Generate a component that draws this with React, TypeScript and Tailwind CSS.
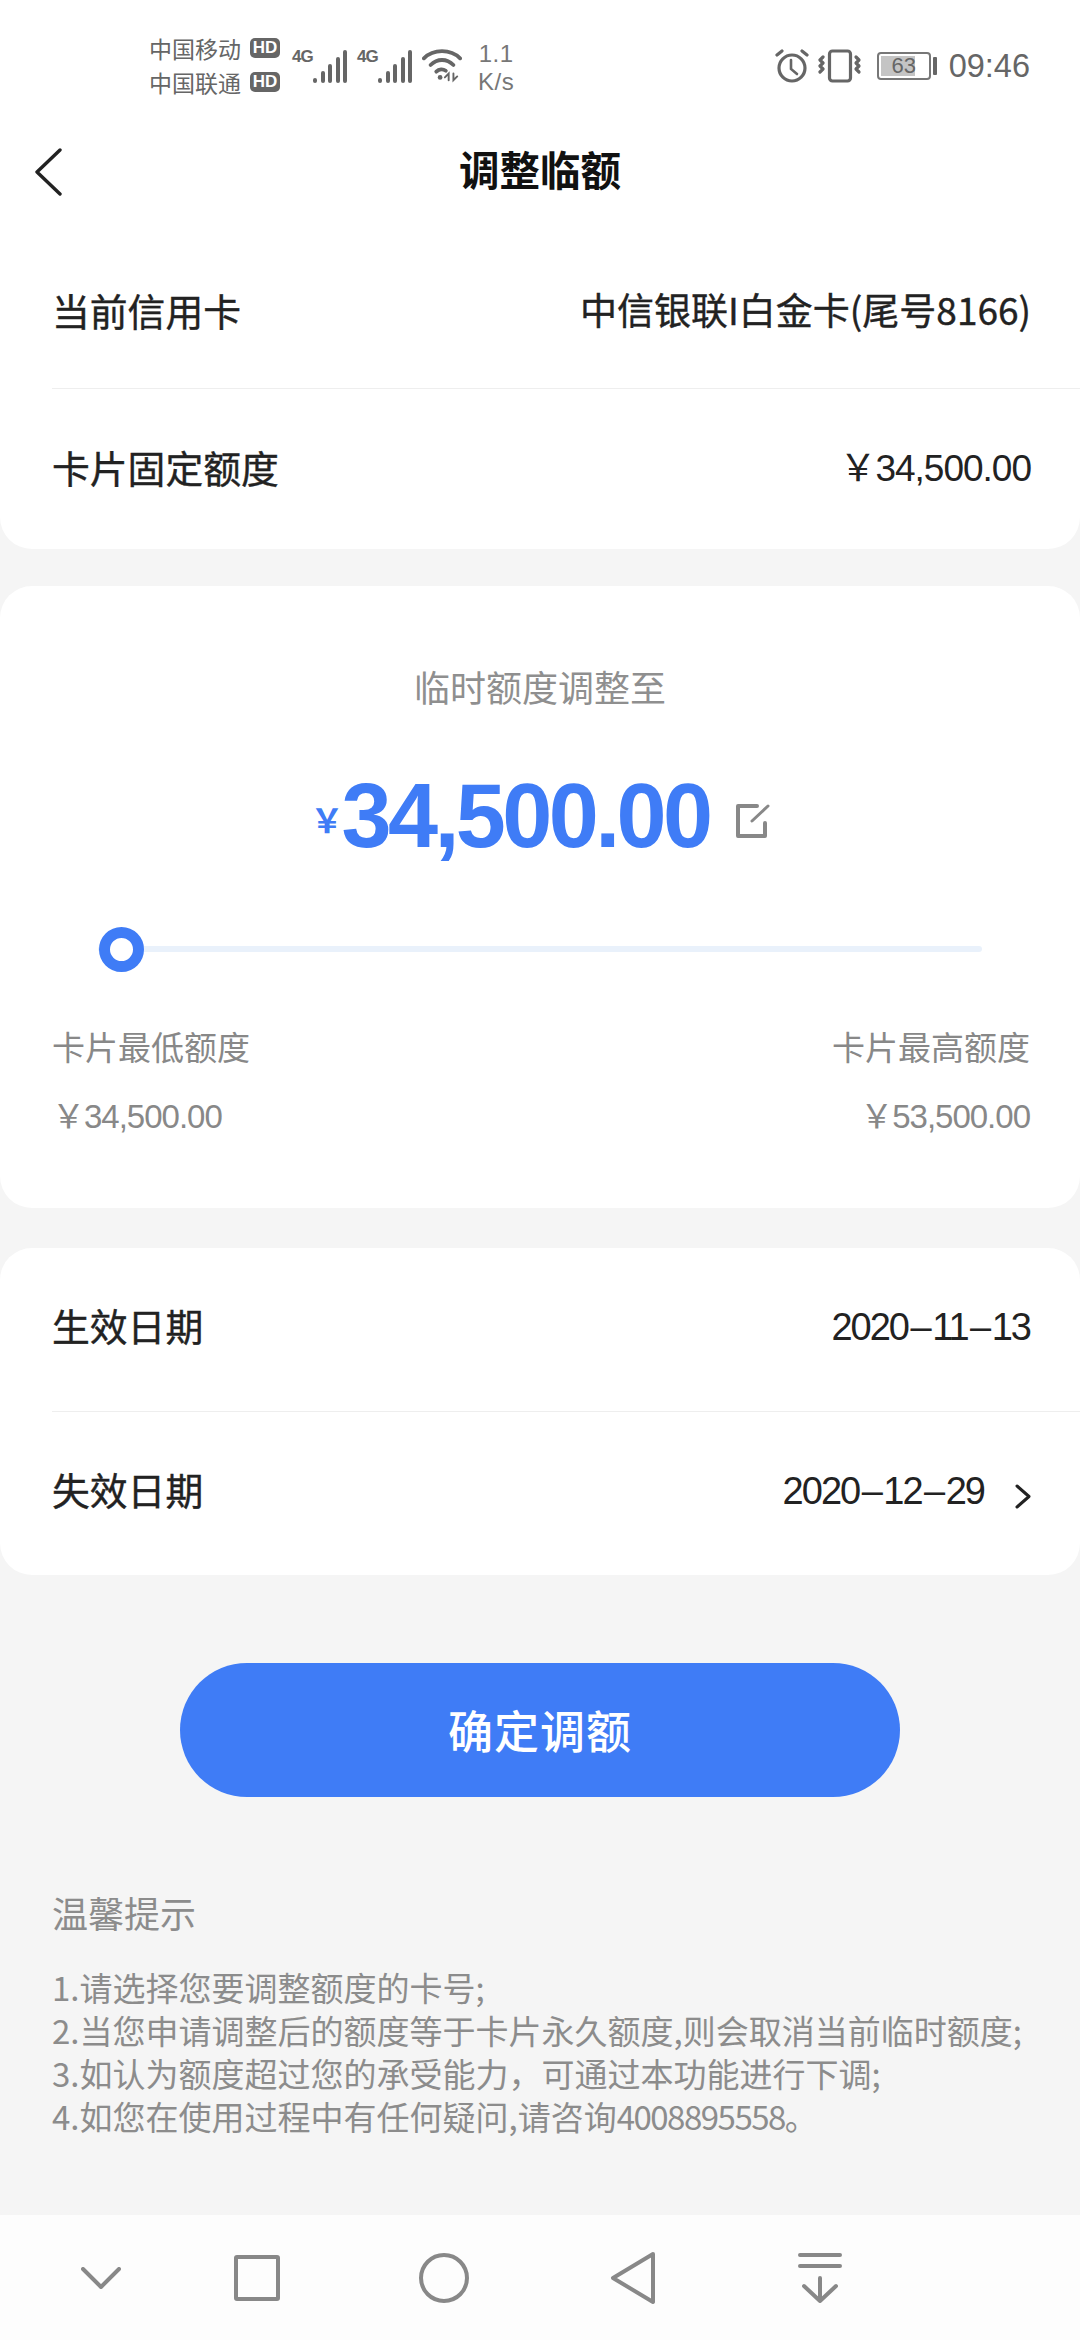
const cjk = "font-['Noto_Sans_CJK_SC','Liberation_Sans',sans-serif]";
const latin = "font-['Liberation_Sans','Noto_Sans_CJK_SC',sans-serif]";

function StatusBar() {
	return (
		<div className="h-[130px] flex items-start text-[#666]">
			<div className="ml-[149px] mt-[35px] flex flex-col gap-[8px] text-[23px] leading-[26px]">
				<div className="flex items-center gap-[9px]">中国移动<HdBadge /></div>
				<div className="flex items-center gap-[9px]">中国联通<HdBadge /></div>
			</div>
			<div className="ml-[12px] mt-[47px] flex items-end">
				<Signal />
				<div className="w-[10px]" />
				<Signal />
				<svg className="ml-[10px]" width="40" height="36" viewBox="0 0 42 36" fill="none" stroke="#666" strokeWidth="4" strokeLinecap="round">
					<path d="M2 11C12 1 30 1 40 11" />
					<path d="M9 18C16 11 26 11 33 18" />
					<path d="M15 25C18 22 22 22 25 24" />
					<circle cx="19" cy="31" r="2.5" fill="#666" stroke="none" />
					<path d="M28 34v-7l-4 4M33 27v7l4-4" strokeWidth="2" />
				</svg>
			</div>
			<div className={`ml-[16px] mt-[40px] flex flex-col items-center ${latin} text-[#777] text-[24px] leading-[28px] tracking-[0.5px]`}>
				<span>1.1</span>
				<span>K/s</span>
			</div>
			<div className="ml-auto mr-[50px] mt-[46px] flex items-center h-[40px]">
				<svg width="34" height="34" viewBox="0 0 34 34" fill="none" stroke="#666" strokeWidth="3.2" strokeLinecap="round">
					<circle cx="17" cy="19" r="13" />
					<path d="M16 11v9l6 5" strokeWidth="2.6" />
					<path d="M2 6l5-4M32 6l-5-4" />
				</svg>
				<svg className="ml-[9px]" width="44" height="34" viewBox="0 0 44 34" fill="none" stroke="#666" strokeWidth="3.2" strokeLinecap="round" strokeLinejoin="round">
					<rect x="11.5" y="2" width="21" height="30" rx="3" />
					<path d="M5 8l-3 3 3 3-3 3 3 3-3 3" />
					<path d="M38 8l3 3-3 3 3 3-3 3 3 3" />
				</svg>
				<div className={`ml-[15px] relative w-[54px] h-[28px] border-2 border-[#777] rounded-[4px] bg-white overflow-hidden flex items-center justify-center ${latin} text-[22px] leading-none`}>
					<div className="absolute left-[2px] top-[2px] bottom-[2px] w-[34px] bg-[#c4c4c4]" />
					<span className="relative">63</span>
				</div>
				<div className="ml-[2px] w-[4px] h-[18px] bg-[#666] rounded-[1px]" />
				<span className={`ml-[12px] ${latin} text-[32.5px] leading-none`}>09:46</span>
			</div>
		</div>
	);
}

function HdBadge() {
	return (
		<span className={`w-[30px] h-[20px] rounded-[5px] bg-[#666] text-white text-[17px] leading-[20px] font-bold text-center ${latin}`}>HD</span>
	);
}

function Signal() {
	return (
		<div className="relative w-[55px] h-[34px] flex items-end justify-end gap-[3.5px]">
			<span className={`absolute left-0 top-[-1px] text-[17px] leading-none font-bold ${latin} tracking-[-1px]`}>4G</span>
			<div className="w-[4px] h-[5px] bg-[#666] rounded-full" />
			<div className="w-[4px] h-[12px] bg-[#666] rounded-full" />
			<div className="w-[4px] h-[19px] bg-[#666] rounded-full" />
			<div className="w-[4px] h-[26px] bg-[#666] rounded-full" />
			<div className="w-[4px] h-[33px] bg-[#666] rounded-full" />
		</div>
	);
}

function Row({ label, value, h }: { label: string; value: React.ReactNode; h: string }) {
	return (
		<div className={`flex items-center justify-between ${h}`}>
			<span className="text-[37.8px] leading-none text-[#222] [-webkit-text-stroke:0.4px_#222]">{label}</span>
			{value}
		</div>
	);
}

function DateText({ parts }: { parts: string[] }) {
	return (
		<span className={`mt-[3px] text-[38px] leading-none text-[#222] tracking-[-2px] ${latin}`}>
			{parts[0]}<span className="px-[2.5px]">–</span>{parts[1]}<span className="px-[2.5px]">–</span>{parts[2]}
		</span>
	);
}

function Nav() {
	return (
		<div className="mt-auto h-[125px] bg-[#fdfdfd] flex items-center">
			<svg className="ml-[81px]" width="40" height="22" viewBox="0 0 40 22" fill="none" stroke="#888" strokeWidth="4" strokeLinecap="round" strokeLinejoin="round">
				<path d="M2 2l18 18L38 2" />
			</svg>
			<div className="ml-[113px] w-[46px] h-[46px] border-[4px] border-[#888] rounded-[3px]" />
			<div className="ml-[139px] w-[50px] h-[50px] border-[4px] border-[#888] rounded-full" />
			<svg className="ml-[141px]" width="46" height="54" viewBox="0 0 46 54" fill="none" stroke="#888" strokeWidth="4" strokeLinejoin="round">
				<path d="M43 3L3 27l40 24z" />
			</svg>
			<svg className="ml-[142px]" width="44" height="50" viewBox="0 0 44 50" fill="none" stroke="#888" strokeWidth="4" strokeLinecap="round" strokeLinejoin="round">
				<path d="M2 2h40M2 13h40M22 25v22M6 33l16 15 16-15" />
			</svg>
		</div>
	);
}

export default function App() {
	return (
		<div className={`w-[1080px] h-[2340px] flex flex-col bg-[#f5f5f5] overflow-hidden ${cjk}`}>
			<div className="bg-white rounded-b-[32px] h-[549px] shrink-0">
				<StatusBar />
				<div className="relative h-[84px] flex items-center justify-center">
					<svg className="absolute left-[34px] top-[18px]" width="30" height="48" viewBox="0 0 30 48" fill="none" stroke="#222" strokeWidth="3.4" strokeLinecap="round" strokeLinejoin="round">
						<path d="M26 2L3 24l23 22" />
					</svg>
					<span className="mt-[-6px] text-[40.5px] leading-none font-bold text-[#111]">调整临额</span>
				</div>
				<div className="pl-[52px] mt-[-4px]">
					<Row
						h="h-[179px] pt-[21px] pr-[49px] border-b border-[#eeeeee]"
						label="当前信用卡"
						value={<span className="text-[37px] leading-none text-[#222] [-webkit-text-stroke:0.4px_#222]">中信银联I白金卡(尾号8166)</span>}
					/>
					<Row
						h="h-[156px] pr-[49px]"
						label="卡片固定额度"
						value={<span className={`mt-[3px] text-[37px] leading-none text-[#222] tracking-[-1px] ${latin}`}>￥34,500.00</span>}
					/>
				</div>
			</div>

			<div className="mt-[37px] h-[622px] shrink-0 bg-white rounded-[32px] pl-[52px] pr-[50px] flex flex-col">
				<div className="mt-[82px] pr-[2px] text-center text-[36px] leading-none text-[#8f8f8f]">临时额度调整至</div>
				<div className={`mt-[67px] pr-[2px] flex items-center justify-center ${latin}`}>
					<span className="text-[33px] font-bold text-[#3f7cf6] mt-[12px] mr-[-2px]">￥</span>
					<span className="text-[90px] leading-none font-bold text-[#3f7cf6] tracking-[-3.6px]">34,500.00</span>
					<svg className="ml-[26px] mt-[10px]" width="34" height="34" viewBox="0 0 34 34" fill="none" stroke="#888" strokeWidth="4" strokeLinecap="round" strokeLinejoin="round">
						<path d="M21 2H2v30h27V19" />
						<path d="M16 17L32 2" strokeWidth="3" />
					</svg>
				</div>
				<div className="relative mt-[85px] ml-[46px] mr-[48px] h-[6px] bg-[#e9f1fb] rounded-full">
					<div className="absolute left-[1px] top-[-19px] w-[45px] h-[45px] rounded-full border-[11px] border-[#3f7cf6] bg-white" />
				</div>
				<div className="mt-[78px] flex justify-between text-[33px] leading-none text-[#888]">
					<span>卡片最低额度</span>
					<span>卡片最高额度</span>
				</div>
				<div className={`mt-[37px] flex justify-between text-[33px] leading-none text-[#888] tracking-[-1px] ${latin}`}>
					<span>￥34,500.00</span>
					<span>￥53,500.00</span>
				</div>
			</div>

			<div className="mt-[40px] h-[327px] shrink-0 bg-white rounded-[32px] pl-[52px]">
				<Row
					h="h-[164px] pb-[9px] pr-[50px] border-b border-[#eeeeee]"
					label="生效日期"
					value={<DateText parts={["2020", "11", "13"]} />}
				/>
				<Row
					h="h-[163px] pb-[9px] pr-[49px]"
					label="失效日期"
					value={
						<div className="flex items-center">
							<DateText parts={["2020", "12", "29"]} />
							<svg className="ml-[31px] mt-[14px]" width="16" height="25" viewBox="0 0 16 25" fill="none" stroke="#222" strokeWidth="3" strokeLinecap="round" strokeLinejoin="round">
								<path d="M2 2l12 10.5L2 23" />
							</svg>
						</div>
					}
				/>
			</div>

			<button className="mt-[88px] mx-[180px] h-[134px] shrink-0 rounded-full bg-[#3f7cf6] text-white text-[45px] font-medium tracking-[1px]">确定调额</button>

			<div className="mt-[97px] pl-[52px] text-[#8c8c8c]">
				<div className="text-[36px] leading-none">温馨提示</div>
				<div className="mt-[36px] text-[33px] leading-[43px]">
					<div>1.请选择您要调整额度的卡号;</div>
					<div>2.当您申请调整后的额度等于卡片永久额度,则会取消当前临时额度;</div>
					<div>3.如认为额度超过您的承受能力，可通过本功能进行下调;</div>
					<div>4.如您在使用过程中有任何疑问,请咨询<span className="tracking-[-1.5px]">4008895558</span>。</div>
				</div>
			</div>

			<Nav />
		</div>
	);
}
